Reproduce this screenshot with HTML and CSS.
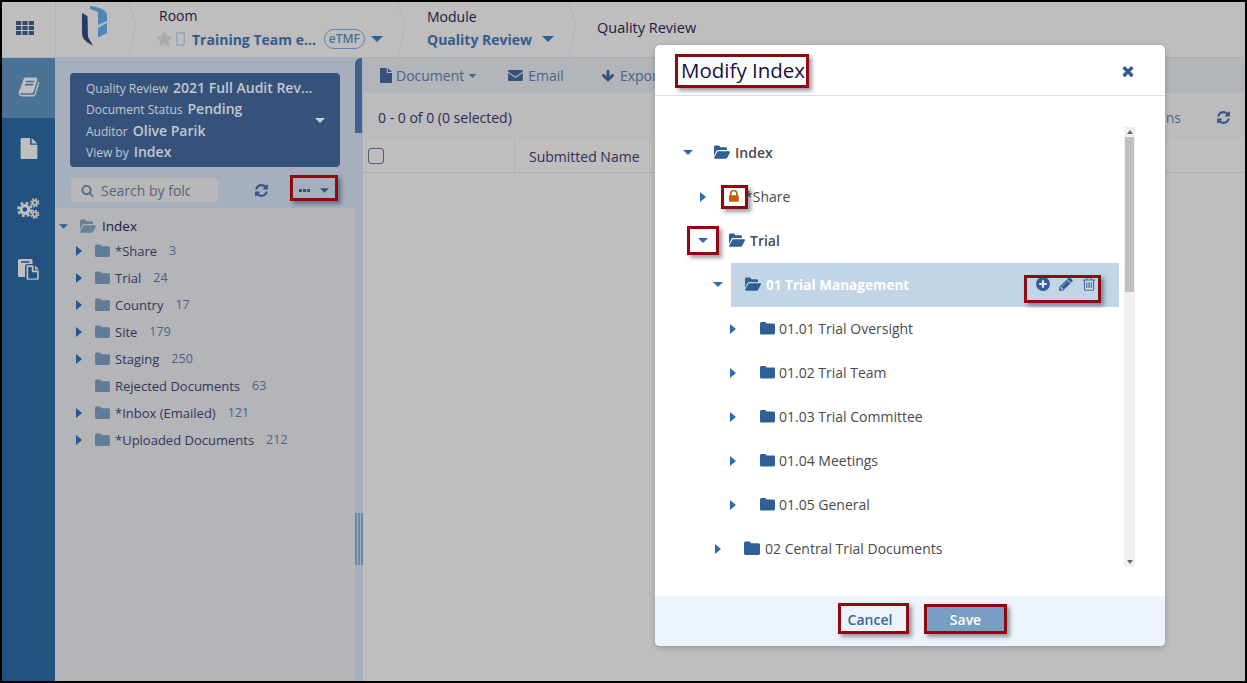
FILE: index.html
```html
<!DOCTYPE html>
<html lang="en">
<head>
<meta charset="utf-8">
<title>Modify Index</title>
<link rel="stylesheet" href="styles.css">
</head>
<body>
<svg class="sprite" xmlns="http://www.w3.org/2000/svg">
  <symbol id="i-folder" viewBox="0 0 16 14"><path d="M0 2.2C0 1.2.8.5 1.700.5h3.300c.8 0 1.300.4 1.600 1l.4.8h7.300c.9 0 1.700.7 1.700 1.700v8.300c0 .9-.8 1.700-1.700 1.700H1.700C.8 14 0 13.300 0 12.300z"/></symbol>
  <symbol id="i-open" viewBox="0 0 16 14"><path d="M0 11V2c0-.8.6-1.500 1.400-1.500h3c.8 0 1.200.4 1.500 1l.4.7h5.300c.8 0 1.400.6 1.400 1.400V5H4.200c-.8 0-1.400.4-1.800 1z"/><path d="M3.600 6.300H15c.8 0 1.200.6.900 1.200l-2.700 5.300c-.3.600-.9 1-1.600 1H1c-.7 0-1.100-.6-.8-1.200z"/></symbol>
  <symbol id="i-refresh" viewBox="0 0 1792 1792"><path d="M1639 1056q0 5-1 7-64 268-268 434.500t-478 166.500q-146 0-282.500-55t-243.500-157l-129 129q-19 19-45 19t-45-19-19-45v-448q0-26 19-45t45-19h448q26 0 45 19t19 45-19 45l-137 137q71 66 161 102t187 36q134 0 250-65t186-179q11-17 53-117 8-23 30-23h192q13 0 22.500 9.500t9.500 22.500zm25-800v448q0 26-19 45t-45 19h-448q-26 0-45-19t-19-45 19-45l138-138q-148-137-349-137-134 0-250 65t-186 179q-11 17-53 117-8 23-30 23h-199q-13 0-22.500-9.500t-9.500-22.500v-7q65-268 270-434.500t480-166.500q146 0 284 55.500t245 156.500l130-129q19-19 45-19t45 19 19 45z"/></symbol>
  <symbol id="i-book" viewBox="0 0 1792 1792"><path d="M1703 478q40 57 18 129l-275 906q-19 64-76.500 107.500t-122.500 43.500h-923q-77 0-148.500-53.500t-99.500-131.500q-24-67-2-127 0-4 3-27t4-37q1-8-3-21.500t-3-19.500q2-11 8-21t16.500-23.500 16.500-23.500q23-38 45-91.500t30-91.500q3-10 .5-30t-.5-28q3-11 17-28t17-23q21-36 42-92t25-90q1-9-2.500-32t.5-28q4-13 22-30.500t22-22.500q19-26 42.500-84.500t27.500-96.500q1-8-3-25.500t-2-26.500q2-8 9-18t18-23 17-21q8-12 16.500-30.500t15-35 16-36 19.500-32 26.500-23.500 36-11.500 47.500 5.500l-1 3q38-9 51-9h761q74 0 114 56t18 130l-274 906q-36 119-71.500 153.500t-128.500 34.500h-869q-27 0-38 15-11 16-1 43 24 70 144 70h923q29 0 56-15.500t35-41.500l300-987q7-22 5-57 38 15 59 43zm-1064 2q-4 13 2 22.500t20 9.500h608q13 0 25.500-9.500t16.500-22.500l21-64q4-13-2-22.500t-20-9.500h-608q-13 0-25.500 9.500t-16.500 22.500zm-83 256q-4 13 2 22.500t20 9.500h608q13 0 25.500-9.500t16.500-22.500l21-64q4-13-2-22.500t-20-9.500h-608q-13 0-25.500 9.500t-16.500 22.500z"/></symbol>
  <symbol id="i-file" viewBox="0 0 16 20"><path d="M1 0h8v6.500h7V19a1 1 0 0 1-1 1H1a1 1 0 0 1-1-1V1a1 1 0 0 1 1-1z"/><path d="M10.500 0 16 5.200h-5.500z"/></symbol>
  <symbol id="i-files" viewBox="0 0 22 21"><path d="M1.500 0h11.500a1.500 1.500 0 0 1 1.500 1.500V5H9.500A2.500 2.500 0 0 0 7 7.500V18H1.500A1.500 1.500 0 0 1 0 16.500V1.500A1.500 1.500 0 0 1 1.500 0zM3 2.200v1.500h8.500V2.200z" fill-rule="evenodd"/><path d="M9.500 6.200h6v5.300h5.300v8.300a1 1 0 0 1-1 1H9.500a1 1 0 0 1-1-1V7.200a1 1 0 0 1 1-1zm.7 1.700v11.500h8.900v-6.200h-5.300V7.900z" fill-rule="evenodd"/><path d="M17 6.500l4 4h-4z"/></symbol>
  <symbol id="i-gears" viewBox="0 0 22 20">
    <g fill="none" stroke="currentColor">
      <circle cx="7.500" cy="11" r="3.700" stroke-width="3"/>
      <circle cx="7.500" cy="11" r="6.200" stroke-width="2.400" stroke-dasharray="2.600 2.270"/>
      <circle cx="17" cy="4.500" r="2" stroke-width="1.700"/>
      <circle cx="17" cy="4.500" r="3.600" stroke-width="1.700" stroke-dasharray="1.700 1.130"/>
      <circle cx="17" cy="15.500" r="2" stroke-width="1.700"/>
      <circle cx="17" cy="15.500" r="3.600" stroke-width="1.700" stroke-dasharray="1.700 1.130"/>
    </g>
  </symbol>
  <symbol id="i-star" viewBox="0 0 1792 1792"><path d="M1728 647q0 22-26 48l-363 354 86 500q1 7 1 20 0 21-10.500 35.500t-30.500 14.500q-19 0-40-12l-449-236-449 236q-22 12-40 12-21 0-31.500-14.500t-10.500-35.500q0-6 2-20l86-500-364-354q-25-27-25-48 0-37 56-46l502-73 225-455q19-41 49-41t49 41l225 455 502 73q56 9 56 46z"/></symbol>
  <symbol id="i-search" viewBox="0 0 1792 1792"><path d="M1216 832q0-185-131.500-316.500t-316.500-131.500-316.500 131.500-131.500 316.500 131.500 316.500 316.500 131.500 316.500-131.500 131.500-316.500zm512 832q0 52-38 90t-90 38q-54 0-90-38l-343-342q-179 124-399 124-143 0-273.500-55.500t-225-150-150-225-55.500-273.500 55.500-273.500 150-225 225-150 273.500-55.500 273.500 55.500 225 150 150 225 55.500 273.500q0 220-124 399l343 343q37 37 37 90z"/></symbol>
  <symbol id="i-down" viewBox="0 0 1792 1792"><path d="M1675 832q0 53-37 90l-651 652q-39 37-91 37-53 0-90-37l-651-652q-38-36-38-90 0-53 38-91l74-75q39-37 91-37 53 0 90 37l294 294v-704q0-52 38-90t90-38h128q52 0 90 38t38 90v704l294-294q37-37 90-37 52 0 91 37l75 75q37 39 37 91z"/></symbol>
  <symbol id="i-times" viewBox="0 0 1792 1792"><path d="M1490 1322q0 40-28 68l-136 136q-28 28-68 28t-68-28l-294-294-294 294q-28 28-68 28t-68-28l-136-136q-28-28-28-68t28-68l294-294-294-294q-28-28-28-68t28-68l136-136q28-28 68-28t68 28l294 294 294-294q28-28 68-28t68 28l136 136q28 28 28 68t-28 68l-294 294 294 294q28 28 28 68z"/></symbol>
  <symbol id="i-lock" viewBox="224 128 1152 1344"><path d="M520 704h512v-192q0-106-75-181t-181-75-181 75-75 181v192zm832 96v576q0 40-28 68t-68 28h-960q-40 0-68-28t-28-68v-576q0-40 28-68t68-28h32v-192q0-184 132-316t316-132 316 132 132 316v192h32q40 0 68 28t28 68z"/></symbol>
  <symbol id="i-pencil" viewBox="0 0 1792 1792"><path d="M491 1536l91-91-235-235-91 91v107h128v128h107zm523-928q0-22-22-22-10 0-17 7l-542 542q-7 7-7 17 0 22 22 22 10 0 17-7l542-542q7-7 7-17zm-54-192l416 416-832 832h-416v-416zm683 96q0 53-37 90l-166 166-416-416 166-165q36-38 90-38 53 0 91 38l235 234q37 39 37 91z"/></symbol>
  <symbol id="i-trash" viewBox="0 0 1792 1792"><path d="M704 736v576q0 14-9 23t-23 9h-64q-14 0-23-9t-9-23v-576q0-14 9-23t23-9h64q14 0 23 9t9 23zm256 0v576q0 14-9 23t-23 9h-64q-14 0-23-9t-9-23v-576q0-14 9-23t23-9h64q14 0 23 9t9 23zm256 0v576q0 14-9 23t-23 9h-64q-14 0-23-9t-9-23v-576q0-14 9-23t23-9h64q14 0 23 9t9 23zm128 724v-948h-896v948q0 22 7 40.500t14.500 27 10.500 8.500h832q3 0 10.500-8.500t14.500-27 7-40.500zm-672-1076h448l-48-117q-7-9-17-11h-317q-10 2-17 11zm928 32v64q0 14-9 23t-23 9h-96v948q0 83-47 143.500t-113 60.500h-832q-66 0-113-58.500t-47-141.500v-952h-96q-14 0-23-9t-9-23v-64q0-14 9-23t23-9h309l70-167q15-37 54-63t79-26h320q40 0 79 26t54 63l70 167h309q14 0 23 9t9 23z"/></symbol>
  <symbol id="c-down" viewBox="0 0 10 5"><path d="M0 0h10L5 5z"/></symbol>
  <symbol id="c-right" viewBox="0 0 6 10"><path d="M0 0l6 5-6 5z"/></symbol>
  <symbol id="sep" viewBox="0 0 9 56"><path d="M.5 0 8 23 .5 56" fill="none" stroke="#abb3c1"/></symbol>
</svg>

<div class="frame">
  <header class="topbar">
    <div class="apps">
      <svg class="apps-icon" viewBox="0 0 18 14"><path d="M0 0h5.200v4H0zM6.400 0h5.200v4H6.400zM12.800 0H18v4h-5.200zM0 5h5.200v4H0zM6.400 5h5.200v4H6.400zM12.800 5H18v4h-5.200zM0 10h5.200v4H0zM6.400 10h5.200v4H6.400zM12.800 10H18v4h-5.200z"/></svg>
    </div>
    <div class="logo-crumb">
      <svg class="logo" viewBox="0 0 27 40"><path fill="#263c66" d="M1 7l5.500 3 .5 21 5 8.500C6 37 1 33 1 27z"/><path fill="#4d87b5" d="M9 0c7 1 17 3 17 9v6l-9 4V6L9 3z"/><path fill="#4d87b5" d="M17 22l9-5v10l-9 4.500z"/></svg>
    </div>
    <svg class="sep"><use href="#sep"/></svg>
    <div class="crumb room">
      <div class="crumb-label">Room</div>
      <div class="crumb-value">
        <svg class="star"><use href="#i-star"/></svg>
        <svg class="phone" viewBox="0 0 9 14"><rect x=".7" y=".7" width="7.600" height="12.600" rx="1.200" fill="none" stroke="currentColor" stroke-width="1.400"/></svg>
        <span class="room-name">Training Team e...</span>
        <span class="pill">eTMF</span>
        <svg class="caret-top"><use href="#c-down"/></svg>
      </div>
    </div>
    <svg class="sep"><use href="#sep"/></svg>
    <div class="crumb module">
      <div class="crumb-label">Module</div>
      <div class="crumb-value">
        <span>Quality Review</span>
        <svg class="caret-top"><use href="#c-down"/></svg>
      </div>
    </div>
    <svg class="sep"><use href="#sep"/></svg>
    <div class="page-name">Quality Review</div>
  </header>

  <div class="workspace">
    <nav class="rail">
      <div class="rail-item active"><svg class="r-book"><use href="#i-book"/></svg></div>
      <div class="rail-item"><svg class="r-file"><use href="#i-file"/></svg></div>
      <div class="rail-item"><svg class="r-gears"><use href="#i-gears"/></svg></div>
      <div class="rail-item"><svg class="r-files"><use href="#i-files"/></svg></div>
    </nav>

    <aside class="panel">
      <div class="panel-top">
        <div class="card">
          <div class="card-rows">
            <div class="card-row"><span class="k">Quality Review</span><b>2021 Full Audit Rev...</b></div>
            <div class="card-row"><span class="k">Document Status</span><b>Pending</b></div>
            <div class="card-row"><span class="k">Auditor</span><b>Olive Parik</b></div>
            <div class="card-row"><span class="k">View by</span><b>Index</b></div>
          </div>
          <svg class="card-caret"><use href="#c-down"/></svg>
        </div>
        <div class="tools">
          <div class="search">
            <svg class="search-icon"><use href="#i-search"/></svg>
            <input class="search-input" type="text" placeholder="Search by folder">
          </div>
          <svg class="tools-refresh"><use href="#i-refresh"/></svg>
          <div class="more"><span class="dots"><i></i><i></i><i></i></span><svg class="more-caret"><use href="#c-down"/></svg></div>
        </div>
      </div>
      <div class="ptree">
        <div class="ptree-root"><svg class="pc-down"><use href="#c-down"/></svg><svg class="pf-open"><use href="#i-open"/></svg><span>Index</span></div>
        <div class="pnode"><svg class="pc-right"><use href="#c-right"/></svg><svg class="pf"><use href="#i-folder"/></svg><span class="pname">*Share</span><span class="pcount">3</span></div>
        <div class="pnode"><svg class="pc-right"><use href="#c-right"/></svg><svg class="pf"><use href="#i-folder"/></svg><span class="pname">Trial</span><span class="pcount">24</span></div>
        <div class="pnode"><svg class="pc-right"><use href="#c-right"/></svg><svg class="pf"><use href="#i-folder"/></svg><span class="pname">Country</span><span class="pcount">17</span></div>
        <div class="pnode"><svg class="pc-right"><use href="#c-right"/></svg><svg class="pf"><use href="#i-folder"/></svg><span class="pname">Site</span><span class="pcount">179</span></div>
        <div class="pnode"><svg class="pc-right"><use href="#c-right"/></svg><svg class="pf"><use href="#i-folder"/></svg><span class="pname">Staging</span><span class="pcount">250</span></div>
        <div class="pnode leaf"><svg class="pf"><use href="#i-folder"/></svg><span class="pname">Rejected Documents</span><span class="pcount">63</span></div>
        <div class="pnode"><svg class="pc-right"><use href="#c-right"/></svg><svg class="pf"><use href="#i-folder"/></svg><span class="pname">*Inbox (Emailed)</span><span class="pcount">121</span></div>
        <div class="pnode"><svg class="pc-right"><use href="#c-right"/></svg><svg class="pf"><use href="#i-folder"/></svg><span class="pname">*Uploaded Documents</span><span class="pcount">212</span></div>
      </div>
    </aside>

    <div class="splitter">
      <div class="split-tab"></div>
      <div class="grip"><i></i><i></i><i></i></div>
    </div>

    <main class="main">
      <div class="toolbar">
        <span class="tool t-doc"><svg class="t-file"><use href="#i-file"/></svg>Document<svg class="t-caret"><use href="#c-down"/></svg></span>
        <span class="tool t-mail"><svg class="t-env" viewBox="0 0 16 12"><path d="M0 1.200C0 .5.500 0 1.200 0h13.600c.7 0 1.200.5 1.200 1.200v.6L8 7 0 1.800z"/><path d="M0 3.400 8 8.600l8-5.200v7.400c0 .7-.5 1.200-1.200 1.200H1.200C.5 12 0 11.500 0 10.800z"/></svg>Email</span>
        <span class="tool t-exp"><svg class="t-arrow"><use href="#i-down"/></svg>Export</span>
      </div>
      <div class="countbar">
        <span>0 - 0 of 0 (0 selected)</span>
        <span class="count-right"><span class="columns">Columns</span><svg class="count-refresh"><use href="#i-refresh"/></svg></span>
      </div>
      <div class="thead">
        <div class="th-check"><span class="checkbox"></span></div>
        <div class="th-name">Submitted Name</div>
      </div>
    </main>
  </div>

  <section class="modal">
    <div class="m-head">
      <h1 class="m-title">Modify Index</h1>
      <svg class="m-close"><use href="#i-times"/></svg>
    </div>
    <div class="m-body">
      <div class="m-tree">
        <div class="row l0"><span class="cb"><svg class="mc-down"><use href="#c-down"/></svg></span><span class="label"><svg class="mf"><use href="#i-open"/></svg>Index</span></div>
        <div class="row l1"><span class="cb"><svg class="mc-right"><use href="#c-right"/></svg></span><span class="label"><svg class="m-lock"><use href="#i-lock"/></svg>*Share</span></div>
        <div class="row l1"><span class="cb"><svg class="mc-down"><use href="#c-down"/></svg></span><span class="label"><svg class="mf"><use href="#i-open"/></svg>Trial</span></div>
        <div class="row l2"><span class="cb"><svg class="mc-down"><use href="#c-down"/></svg></span><span class="label selected"><svg class="mf"><use href="#i-open"/></svg><span class="sel-name">01 Trial Management</span>
          <span class="actions">
            <svg class="a-plus" viewBox="0 0 14 14"><circle cx="7" cy="7" r="7"/><path d="M3.200 7h7.600M7 3.200v7.600" stroke="#d9e5f0" stroke-width="2.200"/></svg>
            <svg class="a-pencil"><use href="#i-pencil"/></svg>
            <svg class="a-trash"><use href="#i-trash"/></svg>
          </span></span></div>
        <div class="row l3"><span class="cb"><svg class="mc-right"><use href="#c-right"/></svg></span><span class="label"><svg class="mf"><use href="#i-folder"/></svg>01.01 Trial Oversight</span></div>
        <div class="row l3"><span class="cb"><svg class="mc-right"><use href="#c-right"/></svg></span><span class="label"><svg class="mf"><use href="#i-folder"/></svg>01.02 Trial Team</span></div>
        <div class="row l3"><span class="cb"><svg class="mc-right"><use href="#c-right"/></svg></span><span class="label"><svg class="mf"><use href="#i-folder"/></svg>01.03 Trial Committee</span></div>
        <div class="row l3"><span class="cb"><svg class="mc-right"><use href="#c-right"/></svg></span><span class="label"><svg class="mf"><use href="#i-folder"/></svg>01.04 Meetings</span></div>
        <div class="row l3"><span class="cb"><svg class="mc-right"><use href="#c-right"/></svg></span><span class="label"><svg class="mf"><use href="#i-folder"/></svg>01.05 General</span></div>
        <div class="row l2"><span class="cb"><svg class="mc-right"><use href="#c-right"/></svg></span><span class="label"><svg class="mf"><use href="#i-folder"/></svg>02 Central Trial Documents</span></div>
      </div>
      <div class="scrollbar">
        <svg class="sb-arrow" viewBox="0 0 6 4"><path d="M0 4l3-4 3 4z"/></svg>
        <div class="sb-track"><div class="sb-thumb"></div></div>
        <svg class="sb-arrow" viewBox="0 0 6 4"><path d="M0 0l3 4 3-4z"/></svg>
      </div>
    </div>
    <div class="m-foot">
      <button class="btn-cancel" type="button">Cancel</button>
      <button class="btn-save" type="button">Save</button>
    </div>
  </section>

  <div class="mark mark-more"></div>
  <div class="mark mark-title"></div>
  <div class="mark mark-lock"></div>
  <div class="mark mark-caret"></div>
  <div class="mark mark-actions"></div>
  <div class="mark mark-cancel"></div>
  <div class="mark mark-save"></div>
</div>
</body>
</html>
```

FILE: styles.css
```css
* { box-sizing: border-box; }
html, body { margin: 0; height: 100%; }
body {
  font-family: "Open Sans", "Liberation Sans", sans-serif;
  font-size: 14px;
  color: #1c1a44;
  overflow: hidden;
  background: #000;
}
svg { display: block; flex: none; fill: currentColor; }
.sprite { display: none; }

.frame {
  position: relative;
  width: 1247px;
  height: 683px;
  border: 2px solid #000;
  background: #bfbdbe;
  display: flex;
  flex-direction: column;
  overflow: hidden;
}

/* top bar */
.topbar {
  height: 56px;
  flex: none;
  display: flex;
  align-items: center;
  background: #bfbdbe;
  border-bottom: 1px solid #aab0bc;
}
.apps {
  width: 54px;
  align-self: stretch;
  display: flex;
  align-items: center;
  justify-content: center;
  padding-right: 8px;
  border-right: 1px solid #b0b3bb;
  color: #354c72;
}
.apps-icon { width: 18px; height: 14px; margin-top: -4px; }
.logo-crumb { width: 72px; align-self: stretch; display: flex; align-items: center; padding-left: 25px; }
.logo { width: 27px; height: 40px; margin-top: -8px; }
.sep { width: 9px; height: 56px; align-self: flex-start; }
.crumb { align-self: stretch; }
.crumb-label { font-size: 14px; font-weight: 500; line-height: 20px; margin-top: 4px; }
.crumb-value { display: flex; align-items: center; height: 24px; font-weight: 700; color: #2f5d8e; }
.room { width: 260px; padding-left: 22px; }
.room .crumb-value { margin-top: 1px; margin-left: -3px; }
.module { width: 162px; padding-left: 21px; }
.module .crumb-label { margin-top: 5px; }
.star { width: 17px; height: 17px; color: #a9abad; }
.phone { width: 9px; height: 14px; margin-left: 3px; color: #8ba7c4; }
.room-name { margin-left: 7px; }
.pill {
  margin-left: 8px;
  width: 41px;
  height: 20px;
  border: 1px solid #5b88b1;
  border-radius: 10px;
  font-size: 12px;
  font-weight: 600;
  line-height: 18px;
  text-align: center;
  color: #47719b;
}
.caret-top { width: 12px; height: 6px; margin-left: 6px; color: #2d6296; }
.module .caret-top { margin-left: 10px; }
.page-name { margin: -4px 0 0 20px; font-weight: 500; font-size: 14.500px; }

/* workspace */
.workspace { flex: 1; min-height: 0; display: flex; }
.rail { width: 53px; flex: none; background: #22527f; color: #c0bebf; }
.rail-item { height: 60px; display: flex; align-items: center; justify-content: center; }
.rail-item.active { background: #4a7295; }
.r-book { width: 22px; height: 22px; margin-top: -3px; }
.r-file { width: 18px; height: 21px; margin-top: 1px; }
.r-gears { width: 23px; height: 21px; margin-top: 1px; }
.r-files { width: 22px; height: 21px; margin-top: 2px; }

.panel { width: 300px; flex: none; display: flex; flex-direction: column; background: #b3b5b9; }
.panel-top { background: #a5afbe; padding: 15px 15px 5px; height: 150px; flex: none; }
.card {
  height: 94px;
  background: #36527a;
  border-radius: 4px;
  color: #c2c8d2;
  display: flex;
  align-items: center;
  padding: 0 14px 0 16px;
}
.card-rows { flex: 1; padding-bottom: 1px; }
.card-row { display: flex; align-items: baseline; height: 21.300px; line-height: 21.300px; font-size: 12px; white-space: nowrap; }
.card-row .k { margin-right: 5px; }
.card-row b { font-size: 14px; font-weight: 600; }
.card-caret { width: 10px; height: 5px; margin-top: 1px; margin-right: 1px; color: #c9ced6; }
.tools { display: flex; align-items: center; margin-top: 10px; height: 26px; }
.search {
  width: 149px;
  height: 26px;
  display: flex;
  align-items: center;
  padding-left: 10px;
  background: #b7b8bc;
  border: 1px solid #a9aeb8;
  border-radius: 3px;
}
.search-icon { width: 13px; height: 13px; color: #5d6b82; }
.search-input {
  width: 89px;
  padding: 0;
  margin-left: 7px;
  border: 0;
  outline: 0;
  background: transparent;
  font: 14px "Open Sans", "Liberation Sans", sans-serif;
}
.search-input::placeholder { color: #5c6472; opacity: 1; }
.tools-refresh { width: 15px; height: 15px; margin-left: 35px; color: #3a5680; }
.more { display: flex; align-items: center; margin-left: 30px; color: #34527c; }
.dots { display: flex; gap: 1px; }
.dots i { width: 3px; height: 3px; background: currentColor; }
.more-caret { width: 9px; height: 5px; margin-left: 10px; margin-top: 1px; }

.ptree { flex: 1; padding: 6px 0 0 4px; }
.ptree-root { display: flex; align-items: center; height: 24px; margin-bottom: -1px; font-weight: 500; font-size: 13.500px; }
.pc-down { width: 9px; height: 5px; color: #2b6396; }
.pf-open { width: 16px; height: 14px; margin-left: 12px; color: #688099; }
.ptree-root span { margin-left: 6px; }
.pnode { display: flex; align-items: center; height: 27px; padding-left: 17px; font-size: 13px; }
.pnode.leaf { padding-left: 23px; }
.pc-right { width: 6px; height: 10px; color: #20598f; margin-top: 1px; }
.pf { width: 15px; height: 13px; margin-left: 13px; color: #627c97; }
.pname { margin-left: 5px; color: #35345a; }
.pcount { margin-left: 12px; font-size: 12.500px; color: #4d6286; }

.splitter { width: 8px; flex: none; background: #a5afbe; display: flex; flex-direction: column; }
.split-tab { width: 7px; height: 75px; background: #41608a; border-top-left-radius: 6px; }
.grip { margin-top: 380px; height: 52px; display: flex; gap: 1px; }
.grip i { width: 2px; background: #6e86a6; }

.main { flex: 1; min-width: 0; background: #bfbdbe; display: flex; flex-direction: column; }
.toolbar { height: 35px; flex: none; background: #b2b5ba; display: flex; align-items: center; padding-left: 17px; color: #4d6286; }
.tool { display: flex; align-items: center; white-space: nowrap; }
.t-file { width: 12px; height: 15px; margin-right: 4px; color: #34527c; }
.t-caret { width: 9px; height: 4px; margin-left: 4px; }
.t-mail { margin-left: 31px; }
.t-env { width: 15px; height: 11px; margin-right: 5px; color: #34527c; }
.t-exp { margin-left: 37px; }
.t-arrow { width: 14px; height: 14px; margin-right: 5px; color: #34527c; }
.countbar { height: 47px; flex: none; background: #bcbbbd; display: flex; align-items: center; justify-content: space-between; padding: 1px 14px 0 15px; color: #2b2c55; }
.count-right { display: flex; align-items: center; }
.columns { color: #56688a; }
.count-refresh { width: 15px; height: 15px; margin-left: 35px; color: #3a5680; }
.thead { height: 33px; flex: none; display: flex; align-items: stretch; border-bottom: 1px solid #a9adb9; }
.th-check { width: 152px; padding-left: 5px; display: flex; align-items: center; border-right: 1px solid #aeb1ba; }
.checkbox { width: 16px; height: 16px; border: 1px solid #4b6283; border-radius: 3px; background: #bfbdbe; }
.th-name { padding-left: 14px; line-height: 33px; color: #2f3058; }

/* modal */
.modal {
  position: absolute;
  left: 653px;
  top: 43px;
  width: 510px;
  height: 601px;
  background: #fff;
  border-radius: 5px;
  box-shadow: 0 2px 6px rgba(0,0,0,.2);
  display: flex;
  flex-direction: column;
  overflow: hidden;
}
.m-head { height: 51px; flex: none; display: flex; align-items: center; justify-content: space-between; padding: 0 29px 0 26px; border-bottom: 1px solid #d6e0e8; }
.m-title { margin: 0; font-size: 20.500px; font-weight: 500; line-height: 26px; color: #161040; }
.m-close { width: 16px; height: 16px; margin-top: 1px; color: #2f5d92; }
.m-body { flex: 1; min-height: 0; display: flex; padding: 31px 30px 29px 23px; }
.m-tree { flex: 1; min-width: 0; overflow: hidden; padding-top: 3px; color: #4a4a4a; }
.row { display: flex; align-items: center; height: 44px; }
.l1 { margin-left: 15px; }
.l2 { margin-left: 30px; }
.l3 { margin-left: 45px; }
.cb { width: 22px; flex: none; padding-left: 5px; color: #2a6bab; }
.mc-down { width: 10px; height: 5px; }
.mc-right { width: 6px; height: 10px; margin: 1px 0 0 2px; }
.label { flex: 1; display: flex; align-items: center; align-self: stretch; padding-left: 14px; white-space: nowrap; }
.mf { width: 16px; height: 14px; margin-right: 5px; color: #2f5f96; }
.l3 .mf { width: 15px; margin-left: 1px; margin-right: 4px; }
.m-lock { width: 10px; height: 12px; margin-right: 6px; color: #bf5f0b; }
.row.l0 .label, .row.l1:nth-child(3) .label { font-weight: 600; }
.selected { background: #c1d5e7; margin: 1px 5px -1px 1px; padding-right: 22px; padding-bottom: 2px; }
.sel-name { flex: 1; color: #fff; font-weight: 700; font-size: 13.600px; }
.actions { display: flex; align-items: center; color: #2f5f96; }
.a-plus { width: 14px; height: 14px; }
.a-pencil { width: 16px; height: 16px; margin-left: 8px; }
.a-trash { width: 16px; height: 16px; margin-left: 7px; color: #4672a2; }
.scrollbar { width: 11px; flex: none; background: #f1f1f1; display: flex; flex-direction: column; align-items: center; }
.sb-arrow { width: 6px; height: 4px; margin: 3px 0; color: #6b6b6b; }
.sb-track { flex: 1; width: 100%; padding: 0 1px; }
.sb-thumb { height: 155px; background: #c1c1c1; }
.m-foot { height: 50px; flex: none; background: #ecf3fa; display: flex; align-items: center; justify-content: center; gap: 29px; padding: 0 0 4px 28px; }
.btn-cancel, .btn-save { border: 0; padding: 0; font: 600 14px "Open Sans", "Liberation Sans", sans-serif; cursor: pointer; }
.btn-cancel { width: 54px; height: 26px; background: transparent; color: #3a6596; }
.btn-save { width: 79px; height: 26px; background: #789fc3; color: #fff; border-radius: 2px; }

/* red annotation boxes laid over the screenshot */
.mark { position: absolute; border: 3px solid #8c0a10; box-shadow: 3px 3px 4px rgba(40,40,60,.45); pointer-events: none; }
.mark-more { left: 288px; top: 173px; width: 48px; height: 26px; }
.mark-title { left: 673px; top: 52px; width: 134px; height: 34px; }
.mark-lock { left: 719px; top: 183px; width: 27px; height: 24px; }
.mark-caret { left: 685px; top: 224px; width: 32px; height: 29px; }
.mark-actions { left: 1022px; top: 273px; width: 77px; height: 28px; }
.mark-cancel { left: 836px; top: 601px; width: 71px; height: 31px; }
.mark-save { left: 922px; top: 602px; width: 83px; height: 30px; }
```
